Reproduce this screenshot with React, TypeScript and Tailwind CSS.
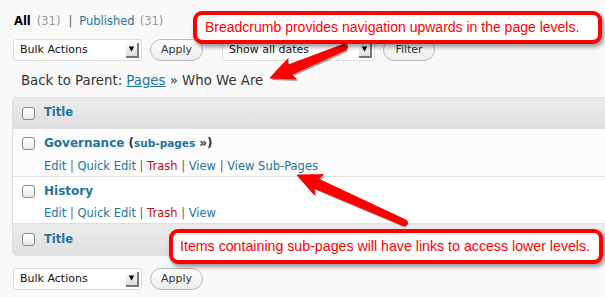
import React from "react";

const V = { fontFamily: '"DejaVu Sans", Verdana, sans-serif' };
const H = { fontFamily: '"Liberation Sans", Arial, sans-serif' };

function Checkbox() {
  return <span className="inline-block w-[13px] h-[13px] rounded-[3px] border border-[#8a8a8a] bg-gradient-to-b from-white to-[#e9e9e9] shrink-0" />;
}

function Select({ label, w }: { label: string; w: number }) {
  return (
    <div className="h-[22px] bg-white border border-[#dcdcdc] rounded-[3px] flex items-center justify-between pl-[6px] pr-[2px] text-[11px] text-[#111]" style={{ width: w }}>
      <span>{label}</span>
      <span className="w-[13px] h-[15px] bg-gradient-to-b from-white to-[#ddd] border-r-2 border-b-2 border-[#777] flex items-center justify-center text-[7px] text-black">▼</span>
    </div>
  );
}

function Btn({ label, w }: { label: string; w: number }) {
  return (
    <div className="h-[22px] rounded-full border border-[#bbb] bg-gradient-to-b from-white to-[#ededed] flex items-center justify-center text-[11px] text-[#333]" style={{ width: w }}>
      {label}
    </div>
  );
}

function Arrow({ x1, y1, x2, y2 }: { x1: number; y1: number; x2: number; y2: number }) {
  const dx = x2 - x1, dy = y2 - y1;
  const L = Math.hypot(dx, dy);
  const ux = dx / L, uy = dy / L;
  const nx = -uy, ny = ux;
  const hl = 21, hw = 11, sw0 = 3, sw1 = 5;
  const bx = x2 - ux * hl, by = y2 - uy * hl;
  const pts = [
    [x1 + nx * sw0, y1 + ny * sw0],
    [bx + nx * sw1, by + ny * sw1],
    [bx + nx * hw - ux * 3, by + ny * hw - uy * 3],
    [x2, y2],
    [bx - nx * hw - ux * 3, by - ny * hw - uy * 3],
    [bx - nx * sw1, by - ny * sw1],
    [x1 - nx * sw0, y1 - ny * sw0],
  ].map((p) => p.join(",")).join(" ");
  return (
    <g>
      <polygon points={pts} fill="rgba(0,0,0,0.35)" transform="translate(1.5,2)" />
      <polygon points={pts} fill="#f00" stroke="#e00" strokeWidth="1" strokeLinejoin="round" />
      <circle cx={x1} cy={y1} r={sw0} fill="#f00" />
    </g>
  );
}

export default function App() {
  return (
    <div className="relative w-[605px] h-[297px] overflow-hidden bg-[#f9f9f9] text-[#333]" style={V}>
      <div className="pt-[13px] pl-[14px] text-[11.5px] h-[39px] flex items-start">
        <span className="font-bold text-black">All</span>
        <span className="text-[#999] ml-[6px]">(31)</span>
        <span className="text-[#666] ml-[8px]">|</span>
        <span className="text-[#21759b] ml-[7px]">Published</span>
        <span className="text-[#999] ml-[5px]">(31)</span>
      </div>
      <div className="flex items-center pl-[13px] h-[22px]">
        <Select label="Bulk Actions" w={129} />
        <div className="ml-[8px]"><Btn label="Apply" w={53} /></div>
        <div className="ml-[19px]"><Select label="Show all dates" w={153} /></div>
        <div className="ml-[8px]"><Btn label="Filter" w={52} /></div>
      </div>
      <div className="pl-[21px] pt-[10px] h-[36px] text-[13.3px] text-[#333]">
        Back to Parent: <span className="text-[#21759b] underline">Pages</span> » Who We Are
      </div>
      <div className="ml-[12px] w-[620px] border border-[#dfdfdf] rounded-tl-[4px] rounded-bl-[4px] overflow-hidden">
        <div className="h-[31px] bg-gradient-to-b from-[#ececec] to-[#dfdfdf] flex items-center pl-[9px] gap-[9px] border-b border-[#dfdfdf]">
          <Checkbox />
          <span className="font-bold text-[11.5px] text-[#21759b]">Title</span>
        </div>
        <div className="h-[48px] bg-[#fcfcfc] border-b border-[#dfdfdf] pl-[9px] pt-[6px]">
          <div className="flex items-center gap-[9px] h-[16px]">
            <Checkbox />
            <span className="font-bold text-[12px] text-[#21759b]">
              Governance <span className="text-[#333]">(</span><span className="text-[10.5px]">sub-pages</span> <span className="text-[#333]">»)</span>
            </span>
          </div>
          <div className="pl-[22px] pt-[7px] text-[11.5px] text-[#21759b]">
            Edit <span className="text-[#666]">|</span> Quick Edit <span className="text-[#666]">|</span> <span className="text-[#bc0b0b]">Trash</span>{" "}
            <span className="text-[#666]">|</span> View <span className="text-[#666]">|</span> View Sub-Pages
          </div>
        </div>
        <div className="h-[47px] bg-white border-b border-[#dfdfdf] pl-[9px] pt-[6px]">
          <div className="flex items-center gap-[9px] h-[16px]">
            <Checkbox />
            <span className="font-bold text-[12px] text-[#21759b]">History</span>
          </div>
          <div className="pl-[22px] pt-[6px] text-[11.5px] text-[#21759b]">
            Edit <span className="text-[#666]">|</span> Quick Edit <span className="text-[#666]">|</span> <span className="text-[#bc0b0b]">Trash</span>{" "}
            <span className="text-[#666]">|</span> View
          </div>
        </div>
        <div className="h-[31px] bg-gradient-to-b from-[#ececec] to-[#dfdfdf] flex items-center pl-[9px] gap-[9px]">
          <Checkbox />
          <span className="font-bold text-[11.5px] text-[#21759b]">Title</span>
        </div>
      </div>
      <div className="flex items-center pl-[13px] mt-[12px]">
        <Select label="Bulk Actions" w={129} />
        <div className="ml-[8px]"><Btn label="Apply" w={53} /></div>
      </div>

      <svg className="absolute left-0 top-0" width="605" height="297">
        <Arrow x1={345} y1={47} x2={270} y2={78} />
        <Arrow x1={405} y1={223} x2={297} y2={175} />
      </svg>

      <div className="absolute left-[193px] top-[11px] w-[409px] h-[33px] rounded-[9px] border-[4px] border-[#f00] bg-white shadow-[2px_3px_4px_rgba(0,0,0,0.4)] flex items-center pl-[8px] text-[14px] text-[#f00]" style={H}>
        Breadcrumb provides navigation upwards in the page levels.
      </div>
      <div className="absolute left-[169px] top-[229px] w-[434px] h-[35px] rounded-[9px] border-[4px] border-[#f00] bg-white shadow-[2px_3px_4px_rgba(0,0,0,0.4)] flex items-center pl-[7px] text-[14.2px] text-[#f00]" style={H}>
        Items containing sub-pages will have links to access lower levels.
      </div>
    </div>
  );
}
